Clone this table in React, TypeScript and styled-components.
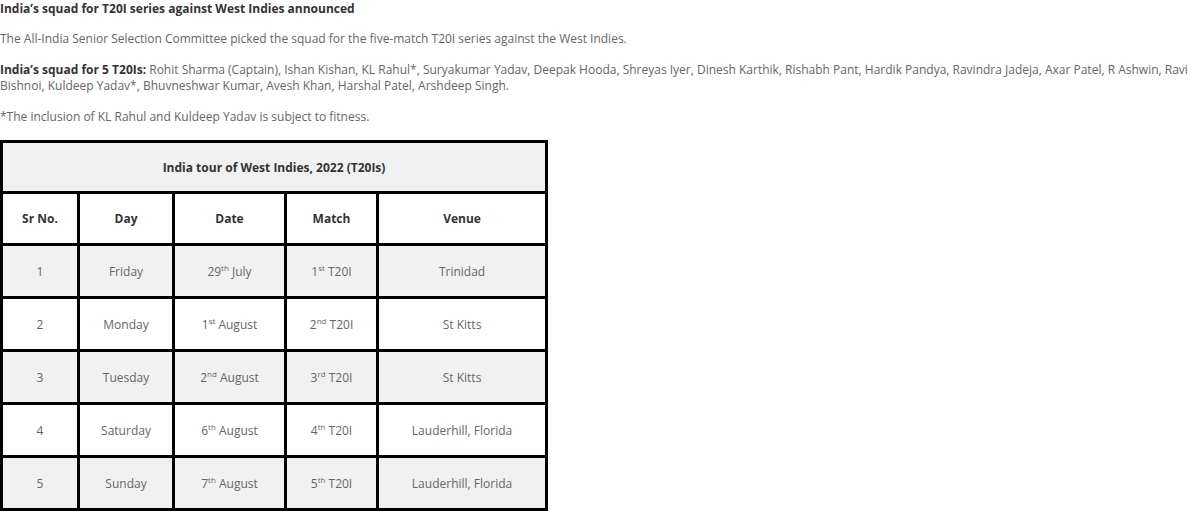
import React from "react";
import styled, { createGlobalStyle } from "styled-components";

const Global = createGlobalStyle`
  html, body { margin: 0; padding: 0; background: #fff; }
  body { font-family: "Open Sans", "Liberation Sans", sans-serif; }
`;

const Page = styled.div`
  width: 1198px;
  padding: 1px 0 0 0;
  color: #555;
`;

const Title = styled.h4`
  margin: 0 0 14px 0;
  font-size: 12px;
  line-height: 16px;
  font-weight: 700;
  color: #333;
`;

const Para = styled.p`
  margin: 0 0 15px 0;
  font-size: 12px;
  line-height: 16px;
  font-weight: 400;
  color: #666;
`;

const Strong = styled.strong`
  font-weight: 700;
  color: #333;
`;

const Table = styled.table`
  border-collapse: collapse;
  border: 3px solid #000;
  width: 548px;
  table-layout: fixed;
  font-size: 12px;
`;

const Col = styled.col<{ $w: number }>`
  width: ${(p) => p.$w}px;
`;

const Caption = styled.th`
  height: 48px;
  background: #f1f1f1;
  border: 3px solid #000;
  font-weight: 700;
  color: #333;
  text-align: center;
  padding: 0;
`;

const HeadCell = styled.th`
  height: 49px;
  background: #fff;
  border: 3px solid #000;
  font-weight: 700;
  color: #333;
  text-align: center;
  padding: 0;
`;

const Row = styled.tr<{ $shade: boolean }>`
  background: ${(p) => (p.$shade ? "#f1f1f1" : "#fff")};
`;

const Cell = styled.td`
  height: 50px;
  border: 3px solid #000;
  text-align: center;
  color: #666;
  padding: 0;
`;

const Sup = styled.sup`
  font-size: 8px;
  vertical-align: 5px;
  line-height: 0;
`;

const rows = [
  { n: "1", day: "Friday", d: "29", ds: "th", m: "July", mn: "1", ms: "st", venue: "Trinidad" },
  { n: "2", day: "Monday", d: "1", ds: "st", m: "August", mn: "2", ms: "nd", venue: "St Kitts" },
  { n: "3", day: "Tuesday", d: "2", ds: "nd", m: "August", mn: "3", ms: "rd", venue: "St Kitts" },
  { n: "4", day: "Saturday", d: "6", ds: "th", m: "August", mn: "4", ms: "th", venue: "Lauderhill, Florida" },
  { n: "5", day: "Sunday", d: "7", ds: "th", m: "August", mn: "5", ms: "th", venue: "Lauderhill, Florida" },
];

export default function App() {
  return (
    <Page>
      <Global />
      <Title>India’s squad for T20I series against West Indies announced</Title>
      <Para>The All-India Senior Selection Committee picked the squad for the five-match T20I series against the West Indies.</Para>
      <Para>
        <Strong>India’s squad for 5 T20Is:</Strong> Rohit Sharma (Captain), Ishan Kishan, KL Rahul*, Suryakumar Yadav, Deepak Hooda, Shreyas Iyer, Dinesh Karthik, Rishabh Pant, Hardik Pandya, Ravindra Jadeja, Axar Patel, R Ashwin, Ravi Bishnoi, Kuldeep Yadav*, Bhuvneshwar Kumar, Avesh Khan, Harshal Patel, Arshdeep Singh.
      </Para>
      <Para>*The inclusion of KL Rahul and Kuldeep Yadav is subject to fitness.</Para>
      <Table>
        <colgroup>
          <Col $w={77} />
          <Col $w={95} />
          <Col $w={112} />
          <Col $w={92} />
          <Col $w={169} />
        </colgroup>
        <thead>
          <tr>
            <Caption colSpan={5}>India tour of West Indies, 2022 (T20Is)</Caption>
          </tr>
          <tr>
            <HeadCell>Sr No.</HeadCell>
            <HeadCell>Day</HeadCell>
            <HeadCell>Date</HeadCell>
            <HeadCell>Match</HeadCell>
            <HeadCell>Venue</HeadCell>
          </tr>
        </thead>
        <tbody>
          {rows.map((r, i) => (
            <Row key={r.n} $shade={i % 2 === 0}>
              <Cell>{r.n}</Cell>
              <Cell>{r.day}</Cell>
              <Cell>
                {r.d}
                <Sup>{r.ds}</Sup> {r.m}
              </Cell>
              <Cell>
                {r.mn}
                <Sup>{r.ms}</Sup> T20I
              </Cell>
              <Cell>{r.venue}</Cell>
            </Row>
          ))}
        </tbody>
      </Table>
    </Page>
  );
}
